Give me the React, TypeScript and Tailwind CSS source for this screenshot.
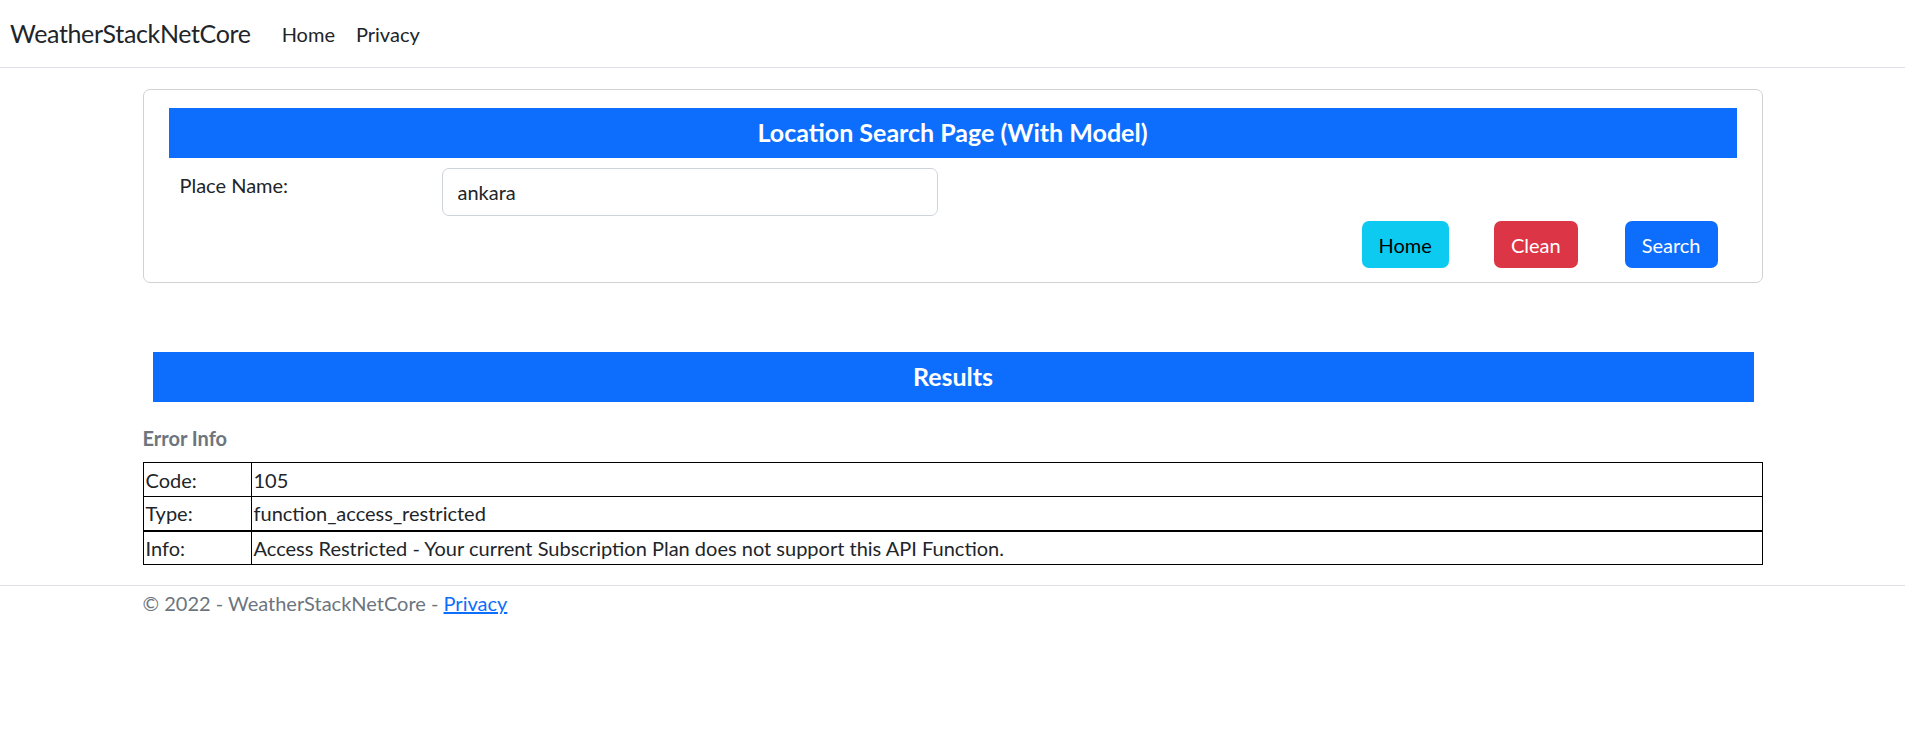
import React from 'react';

export default function App() {
  return (
    <div className="min-h-screen bg-white text-[#212529] text-[20px] leading-[1.5]" style={{ fontFamily: 'Lato, "Noto Sans", sans-serif' }}>
      {/* Navbar */}
      <nav className="h-[68px] border-b border-[#dee2e6] flex items-center px-[10px]">
        <span className="text-[25px] tracking-[-0.35px] mr-[31px]">WeatherStackNetCore</span>
        <a className="text-[20px] mr-[21px] text-[#212529]">Home</a>
        <a className="text-[20px] text-[#212529]">Privacy</a>
      </nav>

      <div className="w-[1620px] mx-auto">
        {/* Search card */}
        <div className="mt-[21px] border border-[#d0d3d6] rounded-[7px] px-[25px] pt-[18px] pb-[14px]">
          <div className="h-[50px] bg-[#0d6efd] flex items-center justify-center">
            <h5 className="text-white text-[25px] font-bold">Location Search Page (With Model)</h5>
          </div>
          <div className="flex mt-[10px]">
            <label className="w-[273px] pl-[11px] pt-[2px]">Place Name:</label>
            <input
              className="w-[496px] h-[48px] border border-[#ced4da] rounded-[7px] px-[15px] text-[20px] outline-none"
              defaultValue="ankara"
            />
          </div>
          <div className="flex justify-end mt-[5px] pr-[19px]">
            <button className="h-[47px] px-[17px] rounded-[7px] bg-[#0dcaf0] text-black">Home</button>
            <button className="h-[47px] px-[17px] rounded-[7px] bg-[#dc3545] text-white ml-[45px]">Clean</button>
            <button className="h-[47px] px-[17px] rounded-[7px] bg-[#0d6efd] text-white ml-[47px]">Search</button>
          </div>
        </div>

        {/* Results */}
        <div className="mt-[69px] ml-[10px] mr-[9px] h-[50px] bg-[#0d6efd] flex items-center justify-center">
          <h5 className="text-white text-[25px] font-bold">Results</h5>
        </div>

        <h6 className="mt-[21px] text-[#6c757d] font-bold text-[20px]">Error Info</h6>

        <table className="w-full border-collapse mt-[9px]">
          <tbody>
            <tr className="h-[34px]">
              <td className="border border-black w-[108px] px-[2px] py-0">Code:</td>
              <td className="border border-black px-[2px] py-0">105</td>
            </tr>
            <tr className="h-[34px]">
              <td className="border border-black border-b-2 px-[2px] py-0">Type:</td>
              <td className="border border-black border-b-2 px-[2px] py-0">function_access_restricted</td>
            </tr>
            <tr className="h-[34px]">
              <td className="border border-black px-[2px] py-0">Info:</td>
              <td className="border border-black px-[2px] py-0">
                Access Restricted - Your current Subscription Plan does not support this API Function.
              </td>
            </tr>
          </tbody>
        </table>
      </div>

      {/* Footer */}
      <footer className="mt-[20px] border-t border-[#dee2e6]">
        <div className="w-[1620px] mx-auto text-[#6c757d] leading-[35px]">
          © 2022 - WeatherStackNetCore - <a className="text-[#0d6efd] underline">Privacy</a>
        </div>
      </footer>
    </div>
  );
}
